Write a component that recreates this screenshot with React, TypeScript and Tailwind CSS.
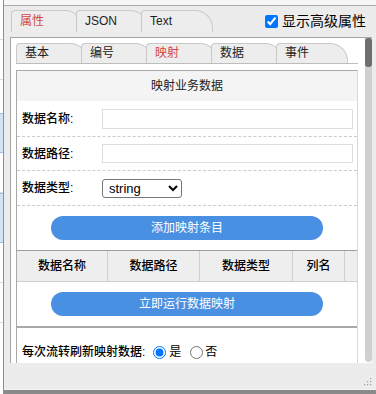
import React from 'react';
import clsx from 'clsx';

const outerTabs = [
  { label: '属性', active: true },
  { label: 'JSON', active: false },
  { label: 'Text', active: false },
];
const innerTabs = [
  { label: '基本', active: false },
  { label: '编号', active: false },
  { label: '映射', active: true },
  { label: '数据', active: false },
  { label: '事件', active: false },
];
const columns = ['数据名称', '数据路径', '数据类型', '列名', ''];

function Tab({ label, active, inner }: { label: string; active: boolean; inner?: boolean }) {
  return (
    <div
      className={clsx(
        'shrink-0 w-[72px] -mr-[7px] rounded-tl-[4px] rounded-tr-[18px] border border-b-0 border-[#c9c9c9] bg-[#ededed] pl-[8px] text-[12px]',
        inner ? 'h-[20px] leading-[19px]' : 'h-[22px] leading-[21px]',
        active ? 'text-[#cf4a44]' : 'text-[#222]'
      )}
    >
      {label}
    </div>
  );
}

function PillButton({ children }: { children: React.ReactNode }) {
  return (
    <button className="mx-auto block w-[272px] h-[24px] rounded-full bg-[#4a90e2] text-[12px] leading-[24px] text-white">
      {children}
    </button>
  );
}

function FieldRow({ label, h, children }: { label: string; h: string; children: React.ReactNode }) {
  return (
    <div className={clsx('flex items-center border-b border-dashed border-[#cccccc]', h)}>
      <span className="w-[85px] shrink-0 pl-[5px] text-[12px] font-medium text-black">{label}</span>
      {children}
    </div>
  );
}

export default function App() {
  return (
    <div className="flex w-[376px] h-[394px] overflow-hidden bg-white font-['Liberation_Sans','Noto_Sans_CJK_SC',sans-serif] text-[#222]">
      {/* page behind the dialog */}
      <div className="w-[3px] shrink-0 flex flex-col bg-white">
        <div className="h-[40px] border-b border-dashed border-[#ddd]" />
        <div className="h-[40px] border-b border-dashed border-[#ddd]" />
        <div className="h-[33px]" />
        <div className="h-[40px] bg-[#d3e2f5] border-y border-[#9fbce3]" />
        <div className="h-[40px] border-b border-dashed border-[#ddd]" />
        <div className="h-[50px] bg-[#d3e2f5] border-y border-[#9fbce3]" />
        <div className="h-[40px] border-b border-dashed border-[#ddd]" />
        <div className="h-[40px] border-b border-dashed border-[#ddd]" />
      </div>

      {/* dialog */}
      <div className="flex-1 flex flex-col border-l border-[#8e8e8e]">
        <div className="h-[5px] bg-[#f7f7f7]" />
        <div className="h-[384px] flex flex-col border-t border-[#aaaaaa] bg-[#ececec]">
          {/* outer tabs + option */}
          <div className="flex items-center pl-[7px] pr-[10px] pt-[4px]">
            {outerTabs.map((t) => (
              <Tab key={t.label} label={t.label} active={t.active} />
            ))}
            <label className="ml-auto flex items-center gap-[4px] text-[14px] text-black">
              <input type="checkbox" defaultChecked className="w-[13px] h-[13px]" />
              显示高级属性
            </label>
          </div>

          {/* scroll area */}
          <div className="mt-[5px] ml-[6px] mr-[4px] h-[326px] flex border-l border-t border-[#a5a5a5] bg-white">
            <div className="flex-1 pl-[5px] pr-[7px] pt-[5px] overflow-hidden">
              <div className="flex h-[21px] border-b border-[#bdbdbd]">
                {innerTabs.map((t) => (
                  <Tab key={t.label} label={t.label} active={t.active} inner />
                ))}
              </div>

              <div className="mt-[6px] border border-[#a8a8a8] border-r-[#d8d8d8]">
                <div className="h-[30px] bg-[#f4f4f4] text-center text-[12px] leading-[30px] text-[#222]">
                  映射业务数据
                </div>
                <FieldRow label="数据名称:" h="h-[36px]">
                  <input className="w-[251px] h-[20px] border border-[#dddddd] bg-white" />
                </FieldRow>
                <FieldRow label="数据路径:" h="h-[34px]">
                  <input className="w-[251px] h-[19px] border border-[#dddddd] bg-white" />
                </FieldRow>
                <FieldRow label="数据类型:" h="h-[35px]">
                  <select className="w-[80px] h-[19px] border border-[#767676] rounded-[3px] bg-white pl-[2px] text-[13px] text-black">
                    <option>string</option>
                  </select>
                </FieldRow>
                <div className="h-[44px] flex items-center">
                  <PillButton>添加映射条目</PillButton>
                </div>

                <div className="grid grid-cols-[91px_92px_93px_52px_1fr] h-[32px] border-y border-t-[#9c9c9c] border-b-[#cfcfcf] bg-[#eeeeee]">
                  {columns.map((c, i) => (
                    <div
                      key={i}
                      className={clsx(
                        'text-center text-[12px] font-medium leading-[30px] text-black',
                        i < columns.length - 1 && 'border-r border-[#cfcfcf]'
                      )}
                    >
                      {c}
                    </div>
                  ))}
                </div>
                <div className="py-[10px] border-b-2 border-[#a9a9a9]">
                  <PillButton>立即运行数据映射</PillButton>
                </div>

                <div className="flex items-center pl-[5px] py-[16px] text-[12px] leading-[16px] text-black">
                  <span className="font-medium">每次流转刷新映射数据:</span>
                  <input type="radio" name="refresh" defaultChecked className="ml-[8px] w-[13px] h-[13px]" />
                  <span className="ml-[3px]">是</span>
                  <input type="radio" name="refresh" className="ml-[9px] w-[13px] h-[13px]" />
                  <span className="ml-[2px]">否</span>
                </div>
              </div>
            </div>

            {/* scrollbar */}
            <div className="w-[7px] shrink-0 flex flex-col">
              <div className="flex-1 rounded-b-[4px] bg-[#d0d0d0]">
                <div className="h-[29px] rounded-[3px] bg-[#6e6e6e]" />
              </div>
              <div className="h-[1px]" />
            </div>
          </div>

          <div className="flex-1 flex items-end justify-end pr-[4px] pb-[3px]">
            <svg width="9" height="9" viewBox="0 0 9 9">
              <g fill="#a0a0a0">
                <rect x="7" y="1" width="1.2" height="1.2" />
                <rect x="4" y="4" width="1.2" height="1.2" />
                <rect x="7" y="4" width="1.2" height="1.2" />
                <rect x="1" y="7" width="1.2" height="1.2" />
                <rect x="4" y="7" width="1.2" height="1.2" />
                <rect x="7" y="7" width="1.2" height="1.2" />
              </g>
            </svg>
          </div>
        </div>
        <div className="h-[1px] bg-[#f4f4f4]" />
        <div className="flex-1 bg-[#8a8a8a]" />
      </div>
    </div>
  );
}
